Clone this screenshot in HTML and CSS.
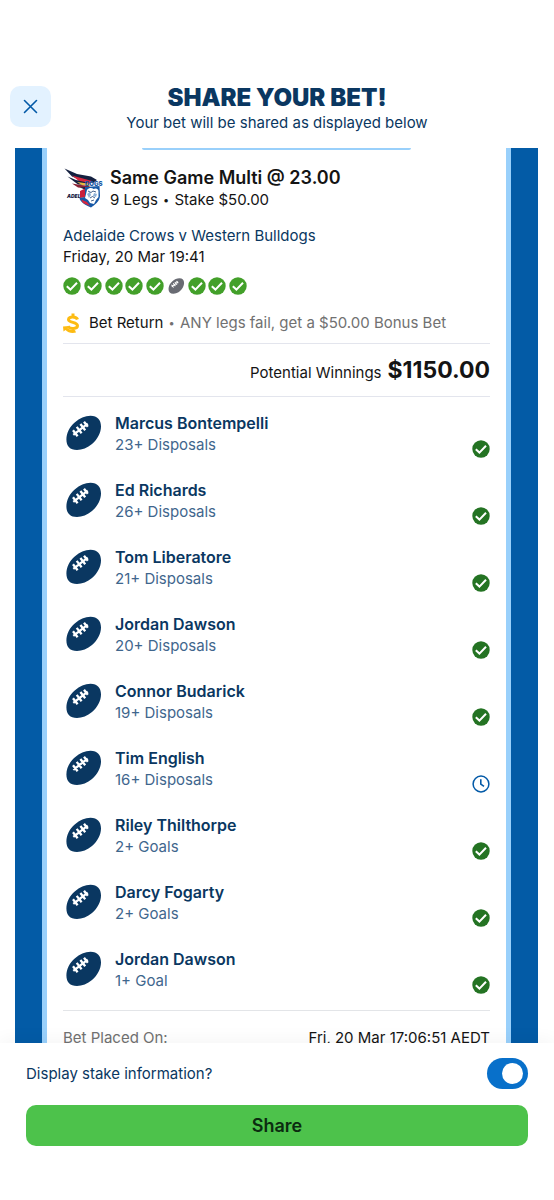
FILE: index.html
```html
<!DOCTYPE html>
<html lang="en">
<head>
  <meta charset="UTF-8">
  <meta name="viewport" content="width=device-width, initial-scale=1.0">
  <title>Share your bet</title>
  <link rel="stylesheet" href="styles.css">
</head>
<body>
  <!-- Shared icons -->
  <svg class="icon-defs" aria-hidden="true">
    <symbol id="ball" viewBox="0 0 40 40">
      <path fill="currentColor" d="M27.500 2.800C34.500 2.800 38 7 38 13.500C38 19.500 34.500 26.500 29 31C24.500 34.800 19 37 14 37C7 37 3.400 33 3.400 26.500C3.400 20 6.500 14 12 9.200C16.500 5.200 22 2.800 27.500 2.800Z"/>
      <path stroke="#fff" stroke-width="2.300" fill="none" d="M10.300 21.800L24.700 10.600M10 17.300L14.600 23.300M13.700 13.900L18.600 20.300M17.400 11L22.200 17.300M21 8.800L24.800 13.800"/>
    </symbol>
    <symbol id="check" viewBox="0 0 18 18">
      <circle cx="9" cy="9" r="8.700" fill="currentColor"/>
      <path d="M3.800 9.300L7.400 12.600L14 5.700" fill="none" stroke="#fff" stroke-width="2"/>
    </symbol>
    <symbol id="clock" viewBox="0 0 18 18">
      <circle cx="9" cy="9" r="7.900" fill="none" stroke="currentColor" stroke-width="1.500"/>
      <path d="M8.800 4.300V9.200L12 11.400" fill="none" stroke="currentColor" stroke-width="1.600"/>
    </symbol>
  </svg>

  <div class="page">
    <header class="header">
      <button class="close-button" type="button" aria-label="Close">
        <svg width="17" height="17" viewBox="0 0 17 17" fill="none" stroke="currentColor" stroke-width="1.600" stroke-linecap="round"><path d="M2.500 2.500L14.500 14.500M14.500 2.500L2.500 14.500"/></svg>
      </button>
      <div class="header-text">
        <h1>SHARE YOUR BET!</h1>
        <p>Your bet will be shared as displayed below</p>
      </div>
    </header>

    <main class="preview">
      <div class="slip">
        <div class="slip-tab"></div>

        <div class="slip-header">
          <svg class="team-logo" viewBox="0 0 40 42" aria-hidden="true">
            <!-- Crows wing -->
            <path fill="#14203f" d="M1.500 1.500L14 7L28 9.500L34 13L30 16L20 14L9 9.500Z"/>
            <path fill="#d7263d" d="M9 8.500L20 11.500L29 14L26 17L17 15Z"/>
            <path fill="#14203f" d="M4.500 9.500L13 13L24 15.500L25 18L15 17.500Z"/>
            <path fill="#e9b93c" d="M14 15L25 16.500L28 19L19 18Z"/>
            <path fill="#8a2234" d="M9 16.500L18 18L27 19L24 21.500L15 20.500Z"/>
            <path fill="#14203f" d="M17 20.500L26 20L23 23Z"/>
            <text class="logo-crows" x="4" y="31">ADEL</text>
            <path fill="#c9203b" d="M17 24L23 21L24 30L17 31Z"/>
            <!-- Bulldogs shield -->
            <path fill="#1758a6" d="M22 20L36.500 19L37 29C36.500 35 31.500 38 28 40.500C22 38 17 35 16.500 31L22 30Z"/>
            <text class="logo-dogs" x="22" y="19">DOGS</text>
            <path fill="#fff" d="M24 23C26 20.500 29 20.500 30.500 22C33 20.500 36 22 35.500 25L35.500 30L33 33L31 37L27 36L25 33L22 31Z"/>
            <path fill="#8fb2d8" d="M24 27L27 25L28 28L26 31ZM31 26L34 27L33 30L30 29Z"/>
            <path fill="none" stroke="#173c70" stroke-width=".8" d="M25 24L28 25.500L30 24L33 25M27 31L29.500 29.500L32 31M28 34L31 33"/>
            <path fill="#d7263d" d="M18 32.500L24 35L27 39L20 36Z"/>
          </svg>
          <div>
            <h2>Same Game Multi @ 23.00</h2>
            <p>9 Legs <span class="dot">•</span> Stake $50.00</p>
          </div>
        </div>

        <div class="match">
          <p class="match-name">Adelaide Crows v Western Bulldogs</p>
          <p>Friday, 20 Mar 19:41</p>
        </div>

        <div class="progress">
          <svg><use href="#check"/></svg>
          <svg><use href="#check"/></svg>
          <svg><use href="#check"/></svg>
          <svg><use href="#check"/></svg>
          <svg><use href="#check"/></svg>
          <svg class="pending"><use href="#ball"/></svg>
          <svg><use href="#check"/></svg>
          <svg><use href="#check"/></svg>
          <svg><use href="#check"/></svg>
        </div>

        <div class="promo">
          <svg class="promo-icon" viewBox="0 0 18 20" aria-hidden="true">
            <path fill="none" stroke="#fdbb12" stroke-width="3" d="M14.500 6.500C13.500 3.500 5.500 3 5.500 6.500C5.500 10.300 14.500 8.500 14.500 12.700C14.500 16 7 16.500 5 13.200M10 .5V4M10 15V18"/>
            <path fill="#fdbb12" d="M0 13.500L6 13L4.500 15C7 17 9 17.500 12 17L13 19.500C8.500 20.500 5 19.500 2.500 17L.5 18.500Z"/>
          </svg>
          <p>Bet Return <span class="promo-terms"><span class="dot">•</span> ANY legs fail, get a $50.00 Bonus Bet</span></p>
        </div>

        <div class="winnings">
          <span>Potential Winnings</span>
          <strong>$1150.00</strong>
        </div>

        <ul class="legs">
          <li class="leg">
            <svg class="leg-ball"><use href="#ball"/></svg>
            <div class="leg-text"><h3>Marcus Bontempelli</h3><p>23+ Disposals</p></div>
            <svg class="leg-status"><use href="#check"/></svg>
          </li>
          <li class="leg">
            <svg class="leg-ball"><use href="#ball"/></svg>
            <div class="leg-text"><h3>Ed Richards</h3><p>26+ Disposals</p></div>
            <svg class="leg-status"><use href="#check"/></svg>
          </li>
          <li class="leg">
            <svg class="leg-ball"><use href="#ball"/></svg>
            <div class="leg-text"><h3>Tom Liberatore</h3><p>21+ Disposals</p></div>
            <svg class="leg-status"><use href="#check"/></svg>
          </li>
          <li class="leg">
            <svg class="leg-ball"><use href="#ball"/></svg>
            <div class="leg-text"><h3>Jordan Dawson</h3><p>20+ Disposals</p></div>
            <svg class="leg-status"><use href="#check"/></svg>
          </li>
          <li class="leg">
            <svg class="leg-ball"><use href="#ball"/></svg>
            <div class="leg-text"><h3>Connor Budarick</h3><p>19+ Disposals</p></div>
            <svg class="leg-status"><use href="#check"/></svg>
          </li>
          <li class="leg">
            <svg class="leg-ball"><use href="#ball"/></svg>
            <div class="leg-text"><h3>Tim English</h3><p>16+ Disposals</p></div>
            <svg class="leg-status waiting"><use href="#clock"/></svg>
          </li>
          <li class="leg">
            <svg class="leg-ball"><use href="#ball"/></svg>
            <div class="leg-text"><h3>Riley Thilthorpe</h3><p>2+ Goals</p></div>
            <svg class="leg-status"><use href="#check"/></svg>
          </li>
          <li class="leg">
            <svg class="leg-ball"><use href="#ball"/></svg>
            <div class="leg-text"><h3>Darcy Fogarty</h3><p>2+ Goals</p></div>
            <svg class="leg-status"><use href="#check"/></svg>
          </li>
          <li class="leg">
            <svg class="leg-ball"><use href="#ball"/></svg>
            <div class="leg-text"><h3>Jordan Dawson</h3><p>1+ Goal</p></div>
            <svg class="leg-status"><use href="#check"/></svg>
          </li>
        </ul>

        <div class="placed">
          <span class="placed-label">Bet Placed On:</span>
          <span>Fri, 20 Mar 17:06:51 AEDT</span>
        </div>
      </div>
    </main>

    <footer class="footer">
      <div class="stake-row">
        <label for="show-stake">Display stake information?</label>
        <input class="toggle" type="checkbox" role="switch" id="show-stake" checked>
      </div>
      <button class="share-button" type="button">Share</button>
    </footer>
  </div>
</body>
</html>
```
FILE: styles.css
```css
* {
  margin: 0;
  padding: 0;
  box-sizing: border-box;
}

body {
  font-family: Inter, "Liberation Sans", sans-serif;
  font-size: 15px;
  line-height: 21px;
  background-color: #fff;
  color: #141414;
}

.icon-defs {
  display: none;
}

.page {
  display: flex;
  flex-direction: column;
  height: 100vh;
}

/* Header */
.header {
  display: grid;
  grid-template-columns: 41px 1fr 41px;
  align-items: start;
  padding: 86px 10px 15px;
}

.close-button {
  display: flex;
  align-items: center;
  justify-content: center;
  height: 41px;
  border: none;
  border-radius: 10px;
  background-color: #e3f2ff;
  color: #0259a7;
  cursor: pointer;
}

.header-text {
  text-align: center;
  color: #0a3761;
}

.header-text h1 {
  font-size: 24px;
  font-weight: 900;
  line-height: 24px;
}

.header-text p {
  padding-top: 2px;
}

/* Bet slip preview */
.preview {
  flex: 1;
  min-height: 0;
  overflow: hidden;
  margin: 0 16px 0 15px;
  padding: 0 27px;
  background-color: #035ba6;
}

.slip {
  min-height: 100%;
  padding: 0 16px 16px;
  border: solid #99d0fb;
  border-width: 0 5px;
  background-color: #fff;
}

.slip-tab {
  width: 63%;
  height: 2px;
  margin: 0 auto;
  border-radius: 0 0 8px 8px;
  background-color: #99d0fb;
}

.slip-header {
  display: flex;
  gap: 7px;
  padding-top: 17px;
}

.slip-header h2 {
  font-size: 18px;
  font-weight: 600;
  line-height: 22px;
}

.team-logo {
  width: 40px;
  height: 42px;
}

.logo-crows {
  font-size: 5px;
  font-style: italic;
  font-weight: 900;
  fill: #14203f;
}

.logo-dogs {
  font-size: 6px;
  font-weight: 900;
  fill: #1758a6;
}

.dot {
  padding: 0 1px;
  font-size: 11px;
  line-height: 1;
  vertical-align: 1px;
}

.match {
  padding-top: 15px;
}

.match-name {
  color: #0a3761;
}

.progress {
  display: flex;
  justify-content: space-between;
  width: 184px;
  padding-top: 10px;
  color: #43a02a;
}

.progress svg {
  width: 18px;
  height: 18px;
}

.progress .pending {
  color: #696b73;
}

.promo {
  display: flex;
  align-items: center;
  gap: 8px;
  padding: 17px 0 10px;
}

.promo-icon {
  width: 18px;
  height: 20px;
}

.promo-terms,
.placed-label {
  color: #717171;
}

.winnings {
  display: flex;
  align-items: baseline;
  justify-content: flex-end;
  gap: 6px;
  padding: 12px 0;
  border: solid #e3e5ed;
  border-width: 1px 0;
}

.winnings strong {
  font-size: 23px;
  line-height: 28px;
}

/* Legs */
.legs {
  list-style: none;
  padding-bottom: 10px;
}

.leg {
  display: flex;
  align-items: flex-start;
  gap: 12px;
  padding: 16px 0 6px;
}

.leg-ball {
  width: 40px;
  height: 40px;
  color: #0a3761;
}

.leg-text {
  flex: 1;
  min-height: 45px;
}

.leg-text h3 {
  font-size: 16px;
  font-weight: 600;
  color: #0a3761;
}

.leg-text p {
  color: #3f668d;
}

.leg-status {
  align-self: flex-end;
  width: 18px;
  height: 18px;
  color: #247323;
}

.leg-status.waiting {
  color: #0259a7;
}

.placed {
  display: flex;
  justify-content: space-between;
  padding-top: 16px;
  border-top: 1px solid #e3e5e8;
}

/* Footer */
.footer {
  z-index: 1;
  padding: 15px 26px 54px;
  background-color: #fff;
  box-shadow: 0 -4px 16px rgba(0, 0, 0, 0.04);
}

.stake-row {
  display: flex;
  align-items: center;
  justify-content: space-between;
  padding-bottom: 16px;
  color: #0a3761;
}

.toggle {
  appearance: none;
  display: flex;
  align-items: center;
  justify-content: flex-end;
  width: 41px;
  height: 31px;
  padding: 0 5px;
  border-radius: 16px;
  background-color: #0870ca;
  cursor: pointer;
}

.toggle::before {
  content: "";
  width: 21px;
  height: 21px;
  border-radius: 50%;
  background-color: #fff;
}

.toggle:not(:checked) {
  justify-content: flex-start;
  background-color: #9aa5b1;
}

.share-button {
  width: 100%;
  height: 41px;
  border: none;
  border-radius: 10px;
  background-color: #4dc24b;
  color: #0b2b10;
  font-family: inherit;
  font-size: 18px;
  font-weight: 600;
  cursor: pointer;
}
```
